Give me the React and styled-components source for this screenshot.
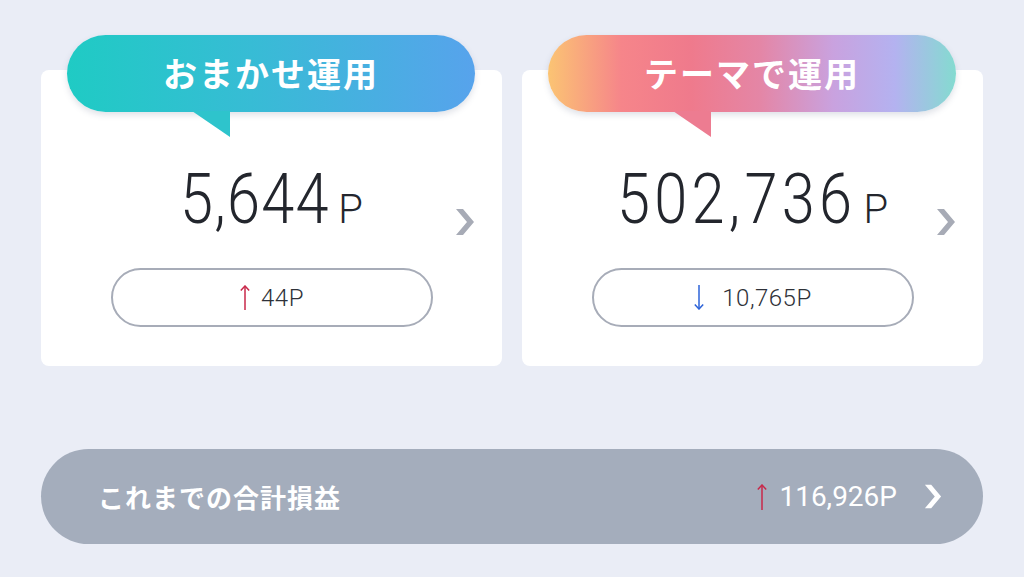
import React from "react";
import styled, { createGlobalStyle } from "styled-components";

const Global = createGlobalStyle`
  html, body { margin: 0; padding: 0; }
  body { background: #eaedf6; font-family: "Noto Sans CJK JP", "Noto Sans", sans-serif; }
`;

const Page = styled.div`
  width: 1024px;
  height: 577px;
  box-sizing: border-box;
  padding: 70px 41px 0 41px;
  background: #eaedf6;
  overflow: hidden;
`;

const Cards = styled.div`
  display: grid;
  grid-template-columns: 461px 461px;
  gap: 20px;
`;

const Card = styled.div`
  position: relative;
  height: 296px;
  background: #ffffff;
  border-radius: 8px;
  display: flex;
  flex-direction: column;
  align-items: center;
`;

const Bubble = styled.div`
  position: absolute;
  top: -35px;
  left: 26px;
  width: 408px;
  height: 77px;
  border-radius: 39px;
  background: ${(p) => p.$bg};
  box-shadow: 0 3px 6px rgba(80, 90, 120, 0.18);
  display: flex;
  align-items: center;
  justify-content: center;
  color: #fff;
  font-family: "Noto Sans CJK JP", sans-serif;
  font-weight: 700;
  font-size: 34px;
  letter-spacing: 2px;
  line-height: 1;
  padding-bottom: 2px;
  box-sizing: border-box;
`;

const Tail = styled.div`
  position: absolute;
  left: 125px;
  top: 76px;
  width: 38px;
  height: 26px;
  background: ${(p) => p.$color};
  clip-path: polygon(0 0, 100% 0, 100% 100%);
`;

const Amount = styled.div`
  margin-top: 94px;
  display: flex;
  align-items: baseline;
  font-family: "Roboto", sans-serif;
  font-weight: 300;
  color: #23262d;
  line-height: 1;
`;

const Digits = styled.span`
  display: inline-block;
  font-size: 70px;
  letter-spacing: ${(p) => p.$ls}px;
  transform: scaleX(0.85);
  transform-origin: left center;
  margin-right: ${(p) => -p.$trim}px;
`;

const Unit = styled.span`
  font-size: 40px;
  margin-left: 9px;
`;

const Chevron = styled.div`
  position: absolute;
  right: 27px;
  top: 138px;
  display: flex;
`;

const Pill = styled.div`
  margin-top: 34px;
  width: 322px;
  height: 59px;
  box-sizing: border-box;
  border: 2px solid #a7acb8;
  border-radius: 30px;
  display: flex;
  align-items: center;
  justify-content: center;
  gap: ${(p) => p.$gap}px;
  font-family: "Roboto", sans-serif;
  font-weight: 300;
  font-size: 24px;
  letter-spacing: 0.5px;
  color: #2e3138;
`;

const Total = styled.div`
  margin-top: 83px;
  height: 95px;
  border-radius: 48px;
  background: #a4adbc;
  display: flex;
  align-items: center;
  justify-content: space-between;
  padding: 0 41px 0 57px;
  color: #ffffff;
`;

const TotalLabel = styled.div`
  font-family: "Noto Sans CJK JP", sans-serif;
  font-weight: 700;
  font-size: 26px;
  letter-spacing: 1px;
  line-height: 1;
`;

const TotalRight = styled.div`
  display: flex;
  align-items: center;
`;

const TotalValue = styled.span`
  font-family: "Roboto", sans-serif;
  font-weight: 400;
  font-size: 28px;
  line-height: 1;
  margin-left: 11px;
`;

const TotalChevron = styled.div`
  margin-left: 27px;
  display: flex;
`;

const Arrow = ({ dir, color, h = 24 }) => (
  <svg width="12" height={h} viewBox={`0 0 12 ${h}`} fill="none">
    {dir === "up" ? (
      <>
        <line x1="6" y1="1" x2="6" y2={h} stroke={color} strokeWidth="1.5" />
        <polyline points="1.8,5.5 6,1 10.2,5.5" stroke={color} strokeWidth="1.5" />
      </>
    ) : (
      <>
        <line x1="6" y1="0" x2="6" y2={h - 1} stroke={color} strokeWidth="1.5" />
        <polyline points={`1.8,${h - 5.5} 6,${h - 1} 10.2,${h - 5.5}`} stroke={color} strokeWidth="1.5" />
      </>
    )}
  </svg>
);

const ChevronIcon = ({ color, w = 20, h = 28 }) => (
  <svg width={w} height={h} viewBox="0 0 20 28">
    <polygon points="1,1 8,1 19,14 8,27 1,27 12,14" fill={color} />
  </svg>
);

const tealGrad = "linear-gradient(90deg, #1fcbc4 0%, #37bcd5 45%, #57a3ec 100%)";
const rainbowGrad =
  "linear-gradient(90deg, #fbc473 0%, #f6858a 18%, #ef7a8c 35%, #e486a6 52%, #c9a2df 70%, #b4b2f0 85%, #84dbd0 100%)";

export default function App() {
  return (
    <>
      <Global />
      <Page>
        <Cards>
          <Card>
            <Bubble $bg={tealGrad}>
              おまかせ運用
              <Tail $color="#2ec4cc" />
            </Bubble>
            <Amount>
              <Digits $ls={1.5} $trim={27}>5,644</Digits>
              <Unit>P</Unit>
            </Amount>
            <Chevron>
              <ChevronIcon color="#a7abb6" />
            </Chevron>
            <Pill $gap={10}>
              <Arrow dir="up" color="#c8284a" h={25} />
              <span>44P</span>
            </Pill>
          </Card>
          <Card>
            <Bubble $bg={rainbowGrad}>
              テーマで運用
              <Tail $color="#ed7c91" />
            </Bubble>
            <Amount>
              <Digits $ls={5} $trim={44}>502,736</Digits>
              <Unit>P</Unit>
            </Amount>
            <Chevron>
              <ChevronIcon color="#a7abb6" />
            </Chevron>
            <Pill $gap={17}>
              <Arrow dir="down" color="#2d63d8" h={25} />
              <span>10,765P</span>
            </Pill>
          </Card>
        </Cards>
        <Total>
          <TotalLabel>これまでの合計損益</TotalLabel>
          <TotalRight>
            <Arrow dir="up" color="#c8284a" h={26} />
            <TotalValue>116,926P</TotalValue>
            <TotalChevron>
              <ChevronIcon color="#ffffff" w={18} h={27} />
            </TotalChevron>
          </TotalRight>
        </Total>
      </Page>
    </>
  );
}
